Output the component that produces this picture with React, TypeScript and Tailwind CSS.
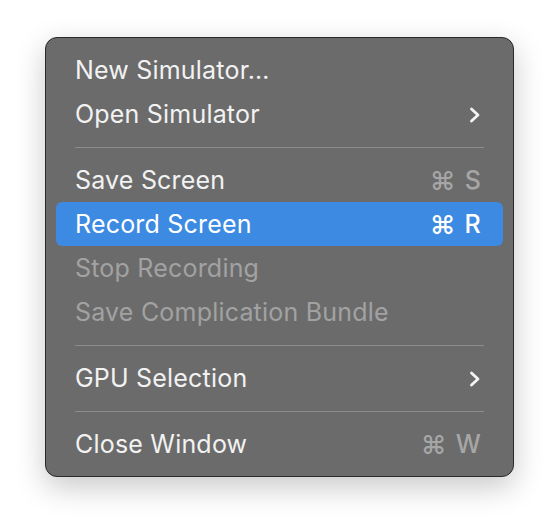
import React from 'react'

type Item =
  | { kind: 'sep' }
  | { kind: 'item'; label: string; key?: string; submenu?: boolean; disabled?: boolean; active?: boolean }

const ITEMS: Item[] = [
  { kind: 'item', label: 'New Simulator…' },
  { kind: 'item', label: 'Open Simulator', submenu: true },
  { kind: 'sep' },
  { kind: 'item', label: 'Save Screen', key: 'S' },
  { kind: 'item', label: 'Record Screen', key: 'R', active: true },
  { kind: 'item', label: 'Stop Recording', disabled: true },
  { kind: 'item', label: 'Save Complication Bundle', disabled: true },
  { kind: 'sep' },
  { kind: 'item', label: 'GPU Selection', submenu: true },
  { kind: 'sep' },
  { kind: 'item', label: 'Close Window', key: 'W' },
]

function Chevron() {
  return (
    <svg width="12" height="16" viewBox="0 0 12 16" fill="none" className="text-[#f4f4f4]">
      <path d="M2.5 2 L9 8 L2.5 14" stroke="currentColor" strokeWidth="2.8" strokeLinecap="round" strokeLinejoin="round" />
    </svg>
  )
}

export default function App() {
  return (
    <div className="min-h-[530px] w-[560px] bg-white pt-[37px] pl-[45px]" style={{ fontFamily: 'Inter, "DejaVu Sans", sans-serif' }}>
      <div className="w-[469px] rounded-[12px] border border-[#2a2a2a] bg-[#6b6b6b] px-[10px] py-[10px] shadow-[0_10px_30px_rgba(0,0,0,0.22)]">
        {ITEMS.map((it, i) =>
          it.kind === 'sep' ? (
            <div key={i} className="flex h-[22px] items-center px-[19px]">
              <div className="h-px w-full bg-[#8c8c8c]" />
            </div>
          ) : (
            <div
              key={i}
              className={
                'flex h-[44px] items-center justify-between rounded-[6px] pt-[2px] pr-[22px] pl-[19px] text-[25px] tracking-[0.2px] ' +
                (it.active ? 'bg-[#3d8ae2] text-white' : it.disabled ? 'text-[#a2a2a2]' : 'text-[#f2f2f2]')
              }
            >
              <span>{it.label}</span>
              {it.submenu ? <Chevron /> : null}
              {it.key ? (
                <span className={'flex items-center gap-[9px] font-medium ' + (it.active ? 'text-white' : 'text-[#a6a6a6]')}>
                  <span className="text-[26px] leading-none">⌘</span>
                  <span>{it.key}</span>
                </span>
              ) : null}
            </div>
          ),
        )}
      </div>
    </div>
  )
}
